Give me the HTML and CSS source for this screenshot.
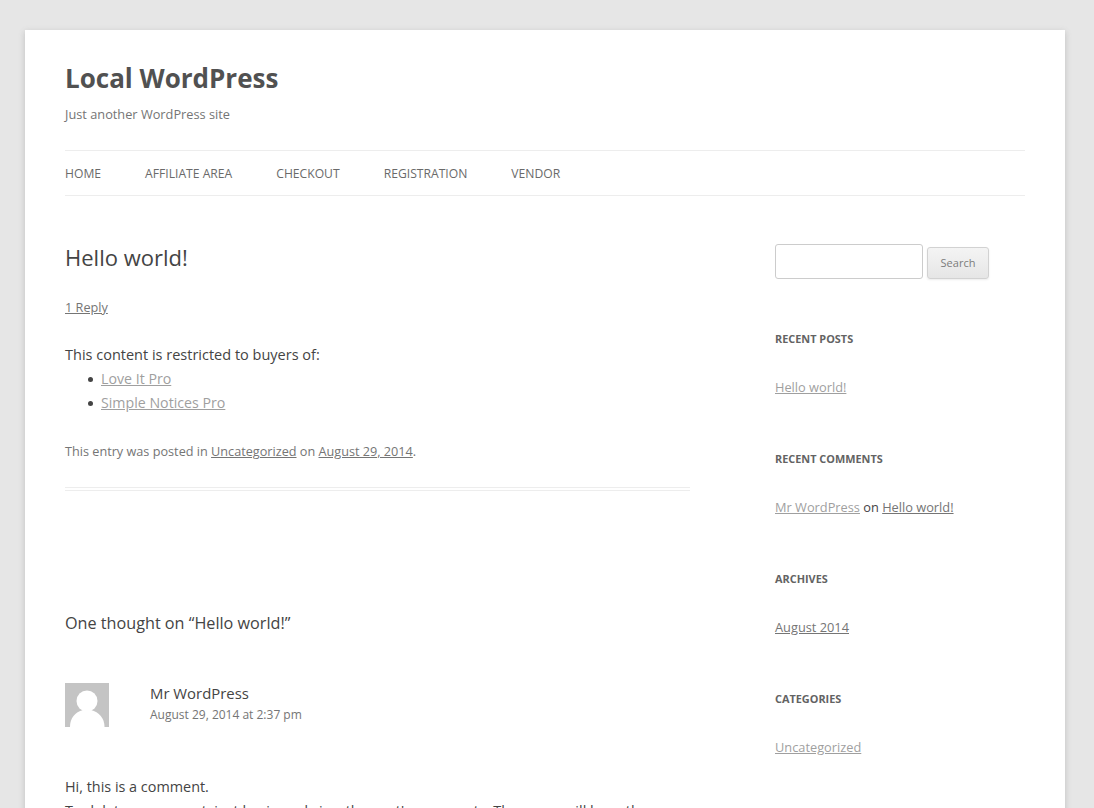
FILE: index.html
```html
<!DOCTYPE html>
<html lang="en">
<head>
<meta charset="utf-8">
<title>Local WordPress</title>
<link rel="stylesheet" href="styles.css">
</head>
<body>
<div class="site">
  <header class="site-header">
    <h1 class="site-title"><a href="#">Local WordPress</a></h1>
    <h2 class="site-description">Just another WordPress site</h2>
    <nav class="main-nav">
      <a href="#">Home</a>
      <a href="#">Affiliate Area</a>
      <a href="#">Checkout</a>
      <a href="#">Registration</a>
      <a href="#">Vendor</a>
    </nav>
  </header>
  <div class="columns">
    <main class="content">
      <article class="post">
        <h1 class="entry-title">Hello world!</h1>
        <p class="comments-link"><a href="#">1 Reply</a></p>
        <div class="entry-content">
          <p class="restricted">This content is restricted to buyers of:</p>
          <ul class="product-list">
            <li><a class="visited" href="#">Love It Pro</a></li>
            <li><a class="visited" href="#">Simple Notices Pro</a></li>
          </ul>
        </div>
        <footer class="entry-meta">This entry was posted in <a href="#">Uncategorized</a> on <a href="#">August 29, 2014</a>.</footer>
      </article>
      <section class="comments">
        <h2 class="comments-title">One thought on “Hello world!”</h2>
        <div class="comment-head">
          <svg class="avatar" width="44" height="44" viewBox="0 0 44 44" aria-hidden="true">
            <rect width="44" height="44" fill="#c4c4c4"/>
            <ellipse cx="22" cy="18" rx="10.500" ry="10.500" fill="#fff"/>
            <path d="M5 44C5 35 10 29 18 27h8C34 29 39.500 35 39.500 44Z" fill="#fff"/>
          </svg>
          <div class="comment-author">
            <div class="author-name">Mr WordPress</div>
            <div class="comment-date">August 29, 2014 at 2:37 pm</div>
          </div>
        </div>
        <div class="comment-body">
          <p>Hi, this is a comment.<br>To delete a comment, just log in and view the post's comments. There you will have the option to edit or delete them.</p>
        </div>
      </section>
    </main>
    <aside class="sidebar">
      <form class="search">
        <input class="search-input" type="text" aria-label="Search">
        <button class="search-button" type="button">Search</button>
      </form>
      <section class="widget">
        <h3 class="widget-title">Recent Posts</h3>
        <p class="widget-line"><a class="visited" href="#">Hello world!</a></p>
      </section>
      <section class="widget">
        <h3 class="widget-title">Recent Comments</h3>
        <p class="widget-line"><a class="visited" href="#">Mr WordPress</a> on <a href="#">Hello world!</a></p>
      </section>
      <section class="widget">
        <h3 class="widget-title">Archives</h3>
        <p class="widget-line"><a href="#">August 2014</a></p>
      </section>
      <section class="widget">
        <h3 class="widget-title">Categories</h3>
        <p class="widget-line"><a class="visited" href="#">Uncategorized</a></p>
      </section>
    </aside>
  </div>
</div>
</body>
</html>
```
FILE: styles.css
```css
* { box-sizing: border-box; }
html { background: #e6e6e6; }
body {
  margin: 0;
  padding: 30px 29px 48px 25px;
  background: #e6e6e6;
  font-family: "Open Sans", sans-serif;
  font-size: 14px;
  line-height: 24px;
  color: #444;
}
a { color: #757575; text-decoration: underline; }
a.visited { color: #9f9f9f; }
h1, h2, h3, p, ul { margin: 0; padding: 0; font-weight: 400; }

.site {
  width: 1040px;
  padding: 0 40px;
  background: #fff;
  box-shadow: 0 2px 6px rgba(100, 100, 100, .3);
}

.site-header { padding: 24px 0 0; }
.site-title { font-size: 26px; font-weight: 700; line-height: 48px; }
.site-title a { color: #515151; text-decoration: none; }
.site-description { font-size: 12.77px; line-height: 24px; color: #757575; }
.main-nav {
  display: flex;
  gap: 44px;
  margin-top: 24px;
  border-top: 1px solid #ededed;
  border-bottom: 1px solid #ededed;
  height: 46px;
  line-height: 46px;
  font-size: 12.15px;
  text-transform: uppercase;
}
.main-nav a { color: #6a6a6a; text-decoration: none; }

.columns { display: flex; justify-content: space-between; margin-top: 48px; }
.content { width: 625px; }
.sidebar { width: 250px; }

.entry-title { font-size: 22px; line-height: 26px; color: #444; }
.comments-link { font-size: 12.7px; line-height: 24px; margin-top: 25px; }
.entry-content { margin-top: 24px; }
.restricted { font-size: 14.5px; line-height: 24px; }
.product-list { list-style: none; margin-left: 23px; font-size: 14.2px; }
.product-list li { display: flex; align-items: center; gap: 8px; line-height: 24px; }
.product-list li::before {
  content: "";
  flex: none;
  width: 5px;
  height: 5px;
  border-radius: 50%;
  background: #444;
}
.entry-meta {
  margin-top: 24px;
  font-size: 12.68px;
  line-height: 24px;
  color: #757575;
  padding-bottom: 24px;
  border-bottom: 1px solid #ededed;
}
.post { border-bottom: 1px solid #ededed; padding-bottom: 2px; }

.comments { margin-top: 120px; }
.comments-title { font-size: 16.2px; line-height: 24px; color: #444; }
.comment-head { display: flex; gap: 41px; margin-top: 48px; }
.avatar { display: block; flex: none; }
.author-name { font-size: 14.9px; line-height: 20px; color: #444; }
.comment-date { font-size: 12px; line-height: 18px; color: #757575; margin-top: 3px; }
.comment-body { margin-top: 48px; font-size: 14.4px; }

.search { display: flex; align-items: flex-end; gap: 4px; }
.search-input {
  width: 148px;
  height: 35px;
  border: 1px solid #ccc;
  border-radius: 3px;
  background: #fff;
  padding: 0;
}
.search-button {
  width: 62px;
  height: 32px;
  border: 1px solid #d2d2d2;
  border-radius: 3px;
  background: linear-gradient(to bottom, #f4f4f4, #e6e6e6);
  box-shadow: 0 1px 2px rgba(64, 64, 64, .1);
  color: #7c7c7c;
  font-family: "Open Sans", sans-serif;
  font-size: 11px;
  line-height: 1;
  padding: 0 0 2px;
}

.widget { margin-top: 48px; }
.widget-title {
  font-size: 10.9px;
  font-weight: 700;
  line-height: 24px;
  text-transform: uppercase;
  color: #636363;
}
.widget-line { font-size: 12.8px; line-height: 24px; margin-top: 24px; }
```
